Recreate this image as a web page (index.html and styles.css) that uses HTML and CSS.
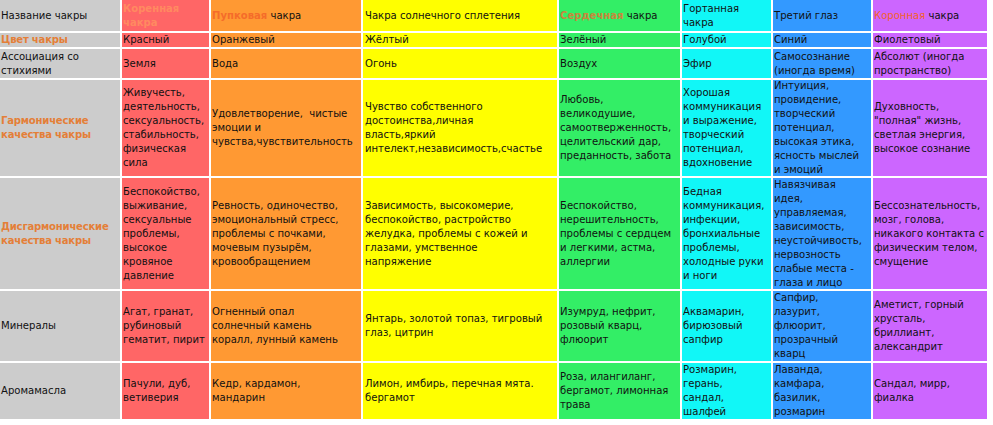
FILE: index.html
```html
<!DOCTYPE html>
<html lang="ru">
<head>
<meta charset="utf-8">
<title>Чакры</title>
<link rel="stylesheet" href="styles.css">
</head>
<body>
<div class="chart">
  <div class="c gray">Название чакры</div>
  <div class="c red"><b class="n-root">Коренная<br>чакра</b></div>
  <div class="c orange"><p><b class="n-sacral">Пупковая</b> чакра</p></div>
  <div class="c yellow">Чакра солнечного сплетения</div>
  <div class="c green"><p><b class="n-heart">Сердечная</b> чакра</p></div>
  <div class="c cyan">Гортанная<br>чакра</div>
  <div class="c blue">Третий глаз</div>
  <div class="c violet"><p><span class="n-crown">Коронная</span> чакра</p></div>

  <div class="c gray label">Цвет чакры</div>
  <div class="c red">Красный</div>
  <div class="c orange">Оранжевый</div>
  <div class="c yellow">Жёлтый</div>
  <div class="c green">Зелёный</div>
  <div class="c cyan">Голубой</div>
  <div class="c blue">Синий</div>
  <div class="c violet">Фиолетовый</div>

  <div class="c gray">Ассоциация со<br>стихиями</div>
  <div class="c red">Земля</div>
  <div class="c orange">Вода</div>
  <div class="c yellow">Огонь</div>
  <div class="c green">Воздух</div>
  <div class="c cyan">Эфир</div>
  <div class="c blue">Самосознание<br>(иногда время)</div>
  <div class="c violet">Абсолют (иногда<br>пространство)</div>

  <div class="c gray label">Гармонические<br>качества чакры</div>
  <div class="c red">Живучесть,<br>деятельность,<br>сексуальность,<br>стабильность,<br>физическая<br>сила</div>
  <div class="c orange">Удовлетворение,&nbsp; чистые<br>эмоции и<br>чувства,чувствительность</div>
  <div class="c yellow">Чувство собственного<br>достоинства,личная<br>власть,яркий<br>интелект,независимость,счастье</div>
  <div class="c green">Любовь,<br>великодушие,<br>самоотверженность,<br>целительский дар,<br>преданность, забота</div>
  <div class="c cyan">Хорошая<br>коммуникация<br>и выражение,<br>творческий<br>потенциал,<br>вдохновение</div>
  <div class="c blue">Интуиция,<br>провидение,<br>творческий<br>потенциал,<br>высокая этика,<br>ясность мыслей<br>и эмоций</div>
  <div class="c violet">Духовность,<br>"полная" жизнь,<br>светлая энергия,<br>высокое сознание</div>

  <div class="c gray label">Дисгармонические<br>качества чакры</div>
  <div class="c red">Беспокойство,<br>выживание,<br>сексуальные<br>проблемы,<br>высокое<br>кровяное<br>давление</div>
  <div class="c orange">Ревность, одиночество,<br>эмоциональный стресс,<br>проблемы с почками,<br>мочевым пузырём,<br>кровообращением</div>
  <div class="c yellow">Зависимость, высокомерие,<br>беспокойство, растройство<br>желудка, проблемы с кожей и<br>глазами, умственное<br>напряжение</div>
  <div class="c green">Беспокойство,<br>нерешительность,<br>проблемы с сердцем<br>и легкими, астма,<br>аллергии</div>
  <div class="c cyan">Бедная<br>коммуникация,<br>инфекции,<br>бронхиальные<br>проблемы,<br>холодные руки<br>и ноги</div>
  <div class="c blue">Навязчивая<br>идея,<br>управляемая,<br>зависимость,<br>неустойчивость,<br>нервозность<br>слабые места -<br>глаза и лицо</div>
  <div class="c violet">Бессознательность,<br>мозг, голова,<br>никакого контакта с<br>физическим телом,<br>смущение</div>

  <div class="c gray">Минералы</div>
  <div class="c red">Агат, гранат,<br>рубиновый<br>гематит, пирит</div>
  <div class="c orange">Огненный опал<br>солнечный камень<br>коралл, лунный камень</div>
  <div class="c yellow">Янтарь, золотой топаз, тигровый<br>глаз, цитрин</div>
  <div class="c green">Изумруд, нефрит,<br>розовый кварц,<br>флюорит</div>
  <div class="c cyan">Аквамарин,<br>бирюзовый<br>сапфир</div>
  <div class="c blue">Сапфир,<br>лазурит,<br>флюорит,<br>прозрачный<br>кварц</div>
  <div class="c violet">Аметист, горный<br>хрусталь,<br>бриллиант,<br>александрит</div>

  <div class="c gray">Аромамасла</div>
  <div class="c red">Пачули, дуб,<br>ветиверия</div>
  <div class="c orange">Кедр, кардамон,<br>мандарин</div>
  <div class="c yellow">Лимон, имбирь, перечная мята.<br>бергамот</div>
  <div class="c green">Роза, илангиланг,<br>бергамот, лимонная<br>трава</div>
  <div class="c cyan">Розмарин,<br>герань,<br>сандал,<br>шалфей</div>
  <div class="c blue">Лаванда,<br>камфара,<br>базилик,<br>розмарин</div>
  <div class="c violet">Сандал, мирр,<br>фиалка</div>
</div>
</body>
</html>
```

FILE: styles.css
```css
html, body {
  margin: 0;
  padding: 0;
  background: #ffffff;
}

body {
  font-family: "DejaVu Sans", Verdana, sans-serif;
  font-stretch: condensed;
  font-size: 11.2px;
  line-height: 14px;
  color: #111111;
}

.chart {
  display: grid;
  grid-template-columns: 120px 87px 150px 194px 121px 89px 98px 114px;
  grid-template-rows: 31px 14px 29px 96px 111px 70px 56px;
  column-gap: 2px;
  row-gap: 2px;
}

.c {
  display: flex;
  align-items: center;
  padding: 0 0 0 1px;
  min-width: 0;
  white-space: nowrap;
}

.c p {
  margin: 0;
}

.gray { background: #cccccc; }
.red { background: #ff6666; }
.orange { background: #ff9933; }
.yellow { background: #ffff00; padding-left: 2px; }
.green { background: #33ee66; }
.cyan { background: #11f7f7; }
.blue { background: #3399ff; }
.violet { background: #cc66ff; }

.label {
  color: #e47f38;
  font-weight: bold;
  letter-spacing: -0.2px;
}

.n-root { color: #ff8a60; }
.n-sacral { color: #f56c2a; }
.n-heart { color: #c9863c; }
.n-crown { color: #f5602c; }
```
